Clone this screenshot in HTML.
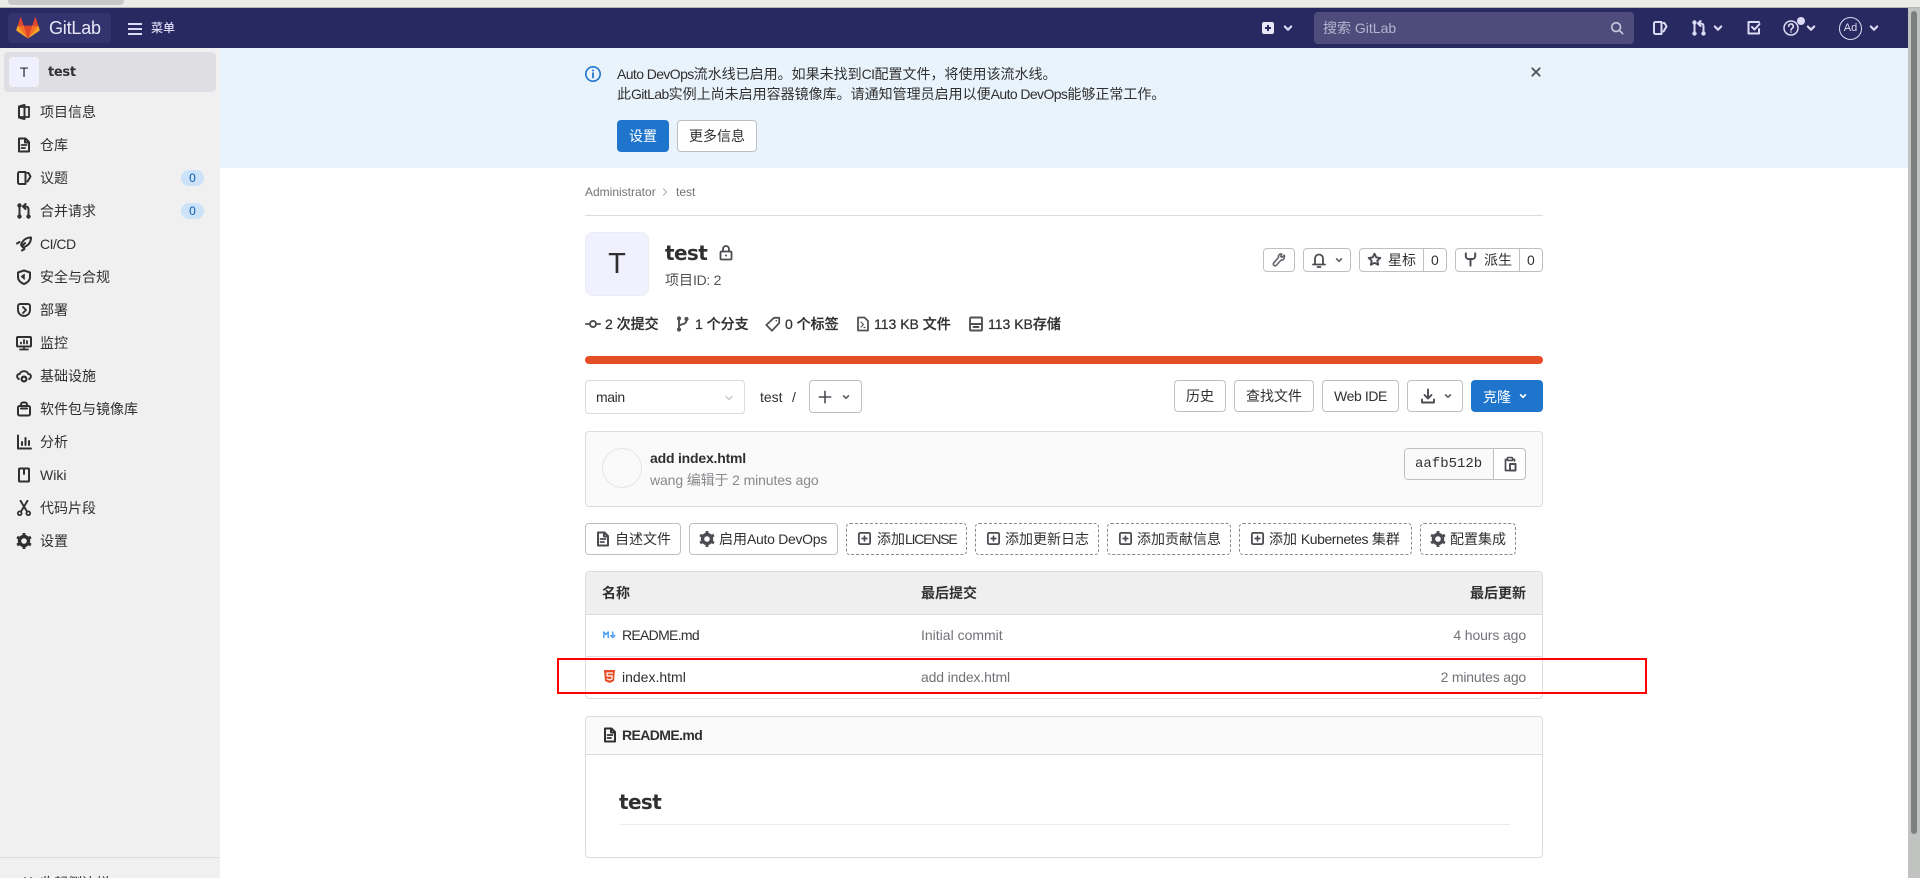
<!DOCTYPE html>
<html lang="zh"><head><meta charset="utf-8"><title>test</title>
<style>
*{box-sizing:border-box}
html,body{margin:0;padding:0;width:1920px;height:878px;overflow:hidden;background:#fff}
body{position:relative;font:14px/20px "Liberation Sans","Noto Sans CJK SC",sans-serif;color:#303030}
.a,.t,svg.i,.b{position:absolute}
.t{white-space:nowrap;line-height:20px}
svg.i{fill:none;stroke:currentColor;stroke-width:1.6;stroke-linecap:round;stroke-linejoin:round;overflow:visible}
.b{background:#fff;border:1px solid #bfbfc3;border-radius:4px}
.d{border-style:dashed;border-color:#89888d}
.s{color:#303030}
.nav{color:#dcdbf5}
.st{font-weight:500;color:#303030;-webkit-text-stroke:.25px #303030}
.n{letter-spacing:-.6px}
</style></head><body>
<svg width="0" height="0" style="position:absolute">
<defs>
<symbol id="project" viewBox="0 0 16 16"><rect x="3" y="3" width="10" height="10" stroke-width="1.800"/><path d="M3 2.500L8.500 1v14L3 13.500z" stroke-width="2"/></symbol>
<symbol id="doc" viewBox="0 0 16 16"><path d="M3 1.500h6.500L13 5v9.500H3zM9 1.500V5.500h4" stroke-width="2"/><path d="M5.500 8h5M5.500 11h3.500" stroke-width="1.800"/></symbol>
<symbol id="issues" viewBox="0 0 16 16"><path d="M9.500 2H3.500A1.500 1.500 0 0 0 2 3.500v9A1.500 1.500 0 0 0 3.500 14h6z" stroke-width="2"/><path d="M11.500 3h1l2 3.500-3 5" stroke-width="2"/></symbol>
<symbol id="mr" viewBox="0 0 16 16"><path d="M3.500 3v10M12.500 13V6.500Q12.500 3.500 9.500 3.500H8M9.500 1L7 3.500 9.500 6" stroke-width="2"/><circle cx="3.500" cy="2.500" r="1.400" fill="currentColor"/><circle cx="3.500" cy="13.500" r="1.400" fill="currentColor"/><circle cx="12.500" cy="13.500" r="1.400" fill="currentColor"/></symbol>
<symbol id="rocket" viewBox="0 0 16 16"><path d="M15 1.500C10 1.500 6.500 4.500 5 9l2 2.500C11.500 10 15 7 15 1.500z" stroke-width="2"/><path d="M1 7.500L3.500 6M6 14.500l2.500-1.500M9 7l-3 3" stroke-width="2"/></symbol>
<symbol id="shield" viewBox="0 0 16 16"><path d="M8 1.500l6 2V8c0 3.500-3 6-6 7-3-1-6-3.500-6-7V3.500z" stroke-width="2"/><path d="M8.500 5v5.500L5 7.500z" fill="currentColor" stroke-width=".6"/></symbol>
<symbol id="deploy" viewBox="0 0 16 16"><path d="M4 2h8a2 2 0 0 1 2 2v4A6 6 0 0 1 2 8V4a2 2 0 0 1 2-2z" stroke-width="1.900"/><path d="M7 5l3 3-3 3" stroke-width="1.900"/></symbol>
<symbol id="monitor" viewBox="0 0 16 16"><rect x="1" y="2" width="14" height="9.500" rx="1" stroke-width="2"/><path d="M4 14.500h8M8 11.500v3M5 8.500v-1M8 8.500V5M11 8.500V6" stroke-width="1.800"/></symbol>
<symbol id="cloud" viewBox="0 0 16 16"><path d="M2.800 11C.3 9.500.6 6 3.700 6c1.300-3.800 7.300-3.800 8.600 0 3.100 0 3.400 3.500.9 5" stroke-width="1.900"/><circle cx="8" cy="11" r="2.400" stroke-width="2.200"/></symbol>
<symbol id="bag" viewBox="0 0 16 16"><rect x="2" y="5" width="12" height="9.500" rx="1.500" stroke-width="2"/><path d="M5 5V3.500a2 2 0 0 1 2-2h2a2 2 0 0 1 2 2V5M5 7.500h6" stroke-width="2"/></symbol>
<symbol id="chart" viewBox="0 0 16 16"><path d="M2 1.500V14.500H15" stroke-width="2"/><path d="M6 8v3M9.500 4v7M13 7v4" stroke-width="2"/></symbol>
<symbol id="wiki" viewBox="0 0 16 16"><rect x="3" y="1.500" width="10" height="13" rx=".8" stroke-width="2"/><path d="M8 2v5" stroke-width="2"/></symbol>
<symbol id="scissors" viewBox="0 0 16 16"><path d="M4.500 .8L11 11.500M11.500 .8L5 11.500" stroke-width="1.900"/><circle cx="3.700" cy="13.300" r="1.900" stroke-width="1.700"/><circle cx="12.300" cy="13.300" r="1.900" stroke-width="1.700"/></symbol>
<symbol id="gear" viewBox="0 0 16 16"><circle cx="8" cy="8" r="4.500" stroke-width="3.400"/><path d="M8 0v2.500M8 13.500V16M1.100 4l2 1.200M12.900 10.800l2 1.200M1.100 12l2-1.200M12.900 5.200l2-1.200" stroke-width="2.800" stroke-linecap="butt"/></symbol>
<symbol id="chev" viewBox="0 0 16 16"><path d="M4.800 6.500L8 9.700l3.200-3.200" stroke-width="2.200"/></symbol>
<symbol id="search" viewBox="0 0 16 16"><circle cx="7" cy="7" r="5" stroke-width="2"/><path d="M11 11l3.500 3.500" stroke-width="2"/></symbol>
<symbol id="close" viewBox="0 0 16 16"><path d="M3 3l10 10M13 3L3 13" stroke-width="2.200"/></symbol>
<symbol id="info" viewBox="0 0 16 16"><circle cx="8" cy="8" r="7.200" stroke-width="1.600"/><path d="M8 7.200V11.500" stroke-width="1.800"/><circle cx="8" cy="4.500" r="1" fill="currentColor" stroke="none"/></symbol>
<symbol id="wrench" viewBox="0 0 16 16"><path d="M14 2.500l-2.500 2.500-1.500-1 1-3C8.500.8 7 2.500 7.500 5L1.800 11.500c-1 2 1 3.800 2.800 2.800L10.500 8c2.500.5 4.500-2 3.500-5.500z" stroke-width="1.800"/></symbol>
<symbol id="bell" viewBox="0 0 16 16"><path d="M2 12.500h12M4 12.500V6.500a4 4 0 0 1 8 0v6M6.500 15h3" stroke-width="1.800"/></symbol>
<symbol id="star" viewBox="0 0 16 16"><path d="M8 1.800l1.900 4 4.300.5-3.200 3 .9 4.300L8 11.500l-3.900 2.100.9-4.300-3.200-3 4.300-.5z" stroke-width="2"/></symbol>
<symbol id="fork" viewBox="0 0 16 16"><path d="M3 1.500v3a3 3 0 0 0 3 3h4a3 3 0 0 0 3-3v-3M8 7.500v7" stroke-width="2.100"/></symbol>
<symbol id="lock" viewBox="0 0 16 16"><rect x="2.500" y="6.500" width="11" height="8" rx="1" stroke-width="1.800"/><path d="M5 6.500V4a3 3 0 0 1 6 0v2.500" stroke-width="1.800"/><circle cx="8" cy="10.500" r="1" fill="currentColor" stroke="none"/></symbol>
<symbol id="commit" viewBox="0 0 16 16"><circle cx="8" cy="8" r="3" stroke-width="2"/><path d="M.8 8H5M11 8h4.200" stroke-width="1.800"/></symbol>
<symbol id="branch" viewBox="0 0 16 16"><path d="M4 2.500V13.500M4 10.500c0-3 7.500-1 7.500-6.500V3" stroke-width="1.900"/><circle cx="4" cy="2.500" r="1.300" fill="currentColor"/><circle cx="4" cy="13.500" r="1.300" fill="currentColor"/><circle cx="11.500" cy="3" r="1.300" fill="currentColor"/></symbol>
<symbol id="tag" viewBox="0 0 16 16"><path d="M9 1.800h5.200V7L7 14.700 1.300 9z" stroke-width="1.800"/><circle cx="11.300" cy="4.700" r=".8" fill="currentColor" stroke="none"/></symbol>
<symbol id="zip" viewBox="0 0 16 16"><path d="M3 1.500h6.500L13 5v9.500H3z" stroke-width="1.800"/><path d="M6 6l2.500 2.500L6 11M9 11.500h1" stroke-width="1.200"/></symbol>
<symbol id="disk" viewBox="0 0 16 16"><rect x="2" y="1.500" width="12" height="13" rx="1" stroke-width="1.900"/><path d="M2 8h12M5.500 11h5" stroke-width="1.900"/></symbol>
<symbol id="download" viewBox="0 0 16 16"><path d="M8 1.500V10M4.500 7L8 10.500 11.500 7M2 11.500V14.500H14V11.500" stroke-width="1.900"/></symbol>
<symbol id="copy" viewBox="0 0 16 16"><path d="M10.500 3.500h2V5M7 14.500H3.500v-11h2" stroke-width="1.700"/><rect x="5.500" y="1.500" width="5" height="3" rx=".8" stroke-width="1.600"/><rect x="8" y="8" width="5.500" height="6.500" stroke-width="1.900"/></symbol>
<symbol id="plusbox" viewBox="0 0 16 16"><rect x="2" y="2" width="12" height="12" rx="1.500" stroke-width="1.900"/><path d="M8 5.500v5M5.500 8h5" stroke-width="1.800"/></symbol>
<symbol id="plus" viewBox="0 0 16 16"><path d="M8 1.500v13M1.500 8h13" stroke-width="1.800"/></symbol>
<symbol id="fox" viewBox="0 0 25 24"><path d="M12.500 23.500L17 10H8z" fill="#e24329" stroke="none"/><path d="M12.500 23.500L8 10H1.700zM12.500 23.500L17 10h6.300z" fill="#fc6d26" stroke="none"/><path d="M1.700 10L.3 14.400a1 1 0 0 0 .4 1.100L12.500 23.500zM23.300 10l1.400 4.400a1 1 0 0 1-.4 1.100L12.500 23.500z" fill="#fca326" stroke="none"/><path d="M1.700 10H8L5.300 1.600a.5.5 0 0 0-.9 0zM23.300 10H17l2.700-8.400a.5.5 0 0 1 .9 0z" fill="#e24329" stroke="none"/></symbol>
</defs></svg>

<!-- browser chrome -->
<div class="a" style="left:0;top:0;width:1920px;height:8px;background:#ebebe9;border-bottom:1px solid #b5b5b5"></div>
<div class="a" style="left:8px;top:0;width:116px;height:5px;background:#c8c8c8;border-radius:0 0 4px 4px"></div>
<!-- scrollbar -->
<div class="a" style="left:1908px;top:8px;width:12px;height:870px;background:#c0c3c0"></div>
<div class="a" style="left:1911px;top:11px;width:6px;height:823px;background:#7c8080;border-radius:3px"></div>

<!-- navbar -->
<div class="a" style="left:0;top:8px;width:1908px;height:40px;background:#292961"></div>
<div class="a" style="left:8px;top:13px;width:103px;height:30px;background:#333370;border-radius:4px"></div>
<svg class="i" style="left:16px;top:16px" width="24" height="23"><use href="#fox"/></svg>
<div class="t" style="left:49px;top:18px;font-size:18px;letter-spacing:-.2px;color:#e7e7f5">GitLab</div>
<div class="a" style="left:128px;top:23px;width:14px;height:2px;background:#dcdbf5"></div>
<div class="a" style="left:128px;top:28px;width:14px;height:2px;background:#dcdbf5"></div>
<div class="a" style="left:128px;top:33px;width:14px;height:2px;background:#dcdbf5"></div>
<div class="t" style="left:151px;top:18px;font-size:12px;color:#dcdbf5;font-weight:500">菜单</div>

<div class="a" style="left:1262px;top:22px;width:12px;height:12px;background:#e8e8f8;border-radius:2px"></div>
<div class="a" style="left:1265px;top:27px;width:6px;height:2px;background:#292961"></div>
<div class="a" style="left:1267px;top:25px;width:2px;height:6px;background:#292961"></div>
<svg class="i nav" style="left:1280px;top:20px" width="16" height="16"><use href="#chev"/></svg>
<div class="a" style="left:1314px;top:12px;width:320px;height:32px;background:#4d4c7b;border-radius:4px"></div>
<div class="t" style="left:1323px;top:18px;color:#b5b5d0">搜索 GitLab</div>
<svg class="i" style="left:1610px;top:21px;color:#c5c5dd" width="14" height="14"><use href="#search"/></svg>
<svg class="i nav" style="left:1652px;top:20px" width="16" height="16"><use href="#issues"/></svg>
<svg class="i nav" style="left:1691px;top:20px" width="16" height="16"><use href="#mr"/></svg>
<svg class="i nav" style="left:1710px;top:20px" width="16" height="16"><use href="#chev"/></svg>
<svg class="i nav" style="left:1746px;top:20px" width="16" height="16"><path d="M13 2H2.500v11.500H13V9M6 7l2.500 2.500L13.500 4" stroke-width="2"/></svg>
<svg class="i nav" style="left:1783px;top:20px" width="16" height="16"><circle cx="8" cy="8" r="7" stroke-width="1.500"/><path d="M5.700 6.300a2.300 2.300 0 1 1 3.400 2C8.300 8.800 8 9.200 8 10" stroke-width="1.600"/><circle cx="8" cy="12" r=".8" fill="currentColor" stroke="none"/></svg>
<div class="a" style="left:1797px;top:17px;width:8px;height:8px;border-radius:50%;background:#dcdbf5"></div>
<svg class="i nav" style="left:1803px;top:20px" width="16" height="16"><use href="#chev"/></svg>
<div class="a" style="left:1839px;top:17px;width:23px;height:23px;border:1px solid #dcdbf5;border-radius:50%;color:#dcdbf5;font-size:11px;line-height:21px;text-align:center">Ad</div>
<svg class="i nav" style="left:1866px;top:20px" width="16" height="16"><use href="#chev"/></svg>

<!-- sidebar -->
<div class="a" style="left:0;top:48px;width:220px;height:830px;background:#f0f0f0"></div>
<div class="a" style="left:4px;top:52px;width:212px;height:40px;background:#dfdfe3;border-radius:4px"></div>
<div class="a" style="left:9px;top:57px;width:30px;height:30px;background:#f0f0ff;border-radius:4px;text-align:center;line-height:30px;font-size:14px;color:#303030">T</div>
<div class="t" style="left:48px;top:63px;font:bold 13px/20px 'DejaVu Sans',sans-serif;color:#303030;letter-spacing:-.3px">test</div>

<svg class="i s" style="left:16px;top:104px" width="16" height="16"><use href="#project"/></svg><div class="t" style="left:40px;top:102px">项目信息</div>
<svg class="i s" style="left:16px;top:137px" width="16" height="16"><use href="#doc"/></svg><div class="t" style="left:40px;top:135px">仓库</div>
<svg class="i s" style="left:16px;top:170px" width="16" height="16"><use href="#issues"/></svg><div class="t" style="left:40px;top:168px">议题</div>
<div class="a" style="left:181px;top:170px;width:23px;height:16px;background:#cbe2f9;border-radius:8px;text-align:center;font-size:12px;line-height:16px;color:#0b5cad">0</div>
<svg class="i s" style="left:16px;top:203px" width="16" height="16"><use href="#mr"/></svg><div class="t" style="left:40px;top:201px">合并请求</div>
<div class="a" style="left:181px;top:203px;width:23px;height:16px;background:#cbe2f9;border-radius:8px;text-align:center;font-size:12px;line-height:16px;color:#0b5cad">0</div>
<svg class="i s" style="left:16px;top:236px" width="16" height="16"><use href="#rocket"/></svg><div class="t" style="left:40px;top:234px;letter-spacing:-.5px">CI/CD</div>
<svg class="i s" style="left:16px;top:269px" width="16" height="16"><use href="#shield"/></svg><div class="t" style="left:40px;top:267px">安全与合规</div>
<svg class="i s" style="left:16px;top:302px" width="16" height="16"><use href="#deploy"/></svg><div class="t" style="left:40px;top:300px">部署</div>
<svg class="i s" style="left:16px;top:335px" width="16" height="16"><use href="#monitor"/></svg><div class="t" style="left:40px;top:333px">监控</div>
<svg class="i s" style="left:16px;top:368px" width="16" height="16"><use href="#cloud"/></svg><div class="t" style="left:40px;top:366px">基础设施</div>
<svg class="i s" style="left:16px;top:401px" width="16" height="16"><use href="#bag"/></svg><div class="t" style="left:40px;top:399px">软件包与镜像库</div>
<svg class="i s" style="left:16px;top:434px" width="16" height="16"><use href="#chart"/></svg><div class="t" style="left:40px;top:432px">分析</div>
<svg class="i s" style="left:16px;top:467px" width="16" height="16"><use href="#wiki"/></svg><div class="t" style="left:40px;top:465px">Wiki</div>
<svg class="i s" style="left:16px;top:500px" width="16" height="16"><use href="#scissors"/></svg><div class="t" style="left:40px;top:498px">代码片段</div>
<svg class="i s" style="left:16px;top:533px" width="16" height="16"><use href="#gear"/></svg><div class="t" style="left:40px;top:531px">设置</div>
<div class="a" style="left:0;top:857px;width:220px;height:1px;background:#dcdcde"></div>
<svg class="i s" style="left:20px;top:876px" width="12" height="12"><path d="M5 2L1 6l4 4M11 2L7 6l4 4" stroke-width="1.700"/></svg>
<div class="t" style="left:40px;top:873px">收起侧边栏</div>

<!-- alert -->
<div class="a" style="left:220px;top:48px;width:1688px;height:120px;background:#e9f3fc"></div>
<svg class="i" style="left:585px;top:66px;color:#1f75cb" width="16" height="16"><use href="#info"/></svg>
<div class="t" style="left:617px;top:64px"><span class="n">Auto DevOps</span>流水线已启用。如果未找到<span class="n">CI</span>配置文件，将使用该流水线。</div>
<div class="t" style="left:617px;top:84px">此<span class="n">GitLab</span>实例上尚未启用容器镜像库。请通知管理员启用以便<span class="n">Auto DevOps</span>能够正常工作。</div>
<div class="a" style="left:617px;top:120px;width:52px;height:32px;background:#1f75cb;border-radius:4px;color:#fff;text-align:center;line-height:32px">设置</div>
<div class="b" style="left:677px;top:120px;width:80px;height:32px;text-align:center;line-height:30px">更多信息</div>
<svg class="i" style="left:1530px;top:66px;color:#4c4b51" width="12" height="12"><use href="#close"/></svg>

<!-- breadcrumb -->
<div class="t" style="left:585px;top:182px;font-size:12px;color:#737278">Administrator</div>
<svg class="i" style="left:662px;top:188px;color:#a5a5aa" width="6" height="8"><path d="M1.500 .8L4.500 4 1.500 7.200" stroke-width="1"/></svg>
<div class="t" style="left:676px;top:182px;font-size:12px;color:#737278">test</div>
<div class="a" style="left:585px;top:215px;width:958px;height:1px;background:#dcdcde"></div>

<!-- project header -->
<div class="a" style="left:585px;top:232px;width:64px;height:64px;background:#f0f0ff;border:1px solid #ececf5;border-radius:8px;text-align:center;font-size:29px;line-height:62px;color:#303030">T</div>
<div class="t" style="left:665px;top:242px;font:bold 20px/22px 'DejaVu Sans',sans-serif;letter-spacing:-.6px;color:#303030">test</div>
<svg class="i" style="left:718px;top:245px;color:#4c4b51" width="16" height="16"><use href="#lock"/></svg>
<div class="t" style="left:665px;top:270px;color:#525252">项目<span style="letter-spacing:-.3px">ID: 2</span></div>

<div class="b" style="left:1263px;top:248px;width:32px;height:24px"></div>
<svg class="i" style="left:1272px;top:253px;color:#626168" width="14" height="14"><use href="#wrench"/></svg>
<div class="b" style="left:1303px;top:248px;width:48px;height:24px"></div>
<svg class="i" style="left:1311px;top:252px;color:#4c4b51" width="16" height="16"><use href="#bell"/></svg>
<svg class="i" style="left:1333px;top:254px;color:#626168" width="12" height="12"><use href="#chev"/></svg>
<div class="b" style="left:1359px;top:248px;width:87.500px;height:24px"></div>
<div class="a" style="left:1423px;top:249px;width:1px;height:22px;background:#bfbfc3"></div>
<svg class="i" style="left:1367px;top:252px;color:#4c4b51" width="15" height="15"><use href="#star"/></svg>
<div class="t" style="left:1388px;top:250px">星标</div>
<div class="t" style="left:1431px;top:250px">0</div>
<div class="b" style="left:1455px;top:248px;width:88px;height:24px"></div>
<div class="a" style="left:1519px;top:249px;width:1px;height:22px;background:#bfbfc3"></div>
<svg class="i" style="left:1463px;top:252px;color:#4c4b51" width="15" height="15"><use href="#fork"/></svg>
<div class="t" style="left:1484px;top:250px">派生</div>
<div class="t" style="left:1527px;top:250px">0</div>

<!-- stats -->
<svg class="i" style="left:585px;top:316px;color:#525252" width="16" height="16"><use href="#commit"/></svg>
<div class="t st" style="left:605px;top:314px">2 次提交</div>
<svg class="i" style="left:675px;top:316px;color:#525252" width="16" height="16"><use href="#branch"/></svg>
<div class="t st" style="left:695px;top:314px">1 个分支</div>
<svg class="i" style="left:765px;top:316px;color:#525252" width="16" height="16"><use href="#tag"/></svg>
<div class="t st" style="left:785px;top:314px">0 个标签</div>
<svg class="i" style="left:855px;top:316px;color:#525252" width="16" height="16"><use href="#zip"/></svg>
<div class="t st" style="left:874px;top:314px">113 KB 文件</div>
<svg class="i" style="left:968px;top:316px;color:#525252" width="16" height="16"><use href="#disk"/></svg>
<div class="t st" style="left:988px;top:314px">113 KB存储</div>

<!-- language bar -->
<div class="a" style="left:585px;top:356px;width:958px;height:8px;background:#e44d26;border-radius:4px"></div>

<!-- branch row -->
<div class="b" style="left:585px;top:380px;width:160px;height:34px;border-color:#dcdcde"></div>
<div class="t" style="left:596px;top:387px;letter-spacing:-.4px">main</div>
<svg class="i" style="left:723px;top:392px;color:#bfbfc3" width="12" height="12"><path d="M3 4.500L6 7.500 9 4.500" stroke-width="1.200"/></svg>
<div class="t" style="left:760px;top:387px">test</div>
<div class="t" style="left:792px;top:387px">/</div>
<div class="b" style="left:809px;top:380px;width:53px;height:33px"></div>
<svg class="i" style="left:818px;top:390px;color:#4c4b51" width="14" height="14"><use href="#plus"/></svg>
<svg class="i" style="left:840px;top:391px;color:#626168" width="12" height="12"><use href="#chev"/></svg>

<div class="b" style="left:1174px;top:380px;width:52px;height:32px;text-align:center;line-height:30px">历史</div>
<div class="b" style="left:1234px;top:380px;width:80px;height:32px;text-align:center;line-height:30px">查找文件</div>
<div class="b" style="left:1322px;top:380px;width:77px;height:32px;text-align:center;line-height:30px;letter-spacing:-.4px">Web IDE</div>
<div class="b" style="left:1407px;top:380px;width:56px;height:32px"></div>
<svg class="i" style="left:1420px;top:388px;color:#4c4b51" width="16" height="16"><use href="#download"/></svg>
<svg class="i" style="left:1442px;top:390px;color:#626168" width="12" height="12"><use href="#chev"/></svg>
<div class="a" style="left:1471px;top:380px;width:72px;height:32px;background:#1f75cb;border-radius:4px"></div>
<div class="t" style="left:1483px;top:387px;color:#fff">克隆</div>
<svg class="i" style="left:1517px;top:390px;color:#fff" width="12" height="12"><use href="#chev"/></svg>

<!-- commit box -->
<div class="a" style="left:585px;top:431px;width:958px;height:76px;background:#fafafa;border:1px solid #dcdcde;border-radius:4px"></div>
<div class="a" style="left:602px;top:448px;width:40px;height:40px;border-radius:50%;background:#fafafa;border:1px solid #e5e5e5"></div>
<div class="t" style="left:650px;top:448px;font-weight:bold;letter-spacing:-.2px">add index.html</div>
<div class="t" style="left:650px;top:470px;color:#89888d;letter-spacing:-.12px">wang 编辑于 2 minutes ago</div>
<div class="a" style="left:1404px;top:448px;width:122px;height:32px;border:1px solid #bfbfc3;border-radius:4px;background:#fff"></div>
<div class="a" style="left:1405px;top:449px;width:89px;height:30px;background:#fafafa;border-right:1px solid #bfbfc3;border-radius:3px 0 0 3px"></div>
<div class="t" style="left:1415px;top:454px;font-family:'Liberation Mono',monospace;font-size:14px;color:#303030">aafb512b</div>
<svg class="i" style="left:1502px;top:456px;color:#4c4b51" width="16" height="16"><use href="#copy"/></svg>

<!-- action buttons -->
<div class="b" style="left:585px;top:523px;width:96px;height:32px"></div>
<svg class="i" style="left:595px;top:531px;color:#4c4b51" width="16" height="16"><use href="#doc"/></svg>
<div class="t" style="left:615px;top:529px">自述文件</div>
<div class="b" style="left:689px;top:523px;width:149px;height:32px"></div>
<svg class="i" style="left:699px;top:531px;color:#4c4b51" width="16" height="16"><use href="#gear"/></svg>
<div class="t" style="left:719px;top:529px">启用<span style="letter-spacing:-.3px">Auto DevOps</span></div>
<div class="b d" style="left:846px;top:523px;width:121px;height:32px"></div>
<svg class="i" style="left:857px;top:531px;color:#4c4b51" width="15" height="15"><use href="#plusbox"/></svg>
<div class="t" style="left:877px;top:529px">添加<span style="letter-spacing:-1.200px">LICENSE</span></div>
<div class="b d" style="left:975px;top:523px;width:124px;height:32px"></div>
<svg class="i" style="left:986px;top:531px;color:#4c4b51" width="15" height="15"><use href="#plusbox"/></svg>
<div class="t" style="left:1005px;top:529px">添加更新日志</div>
<div class="b d" style="left:1107px;top:523px;width:124px;height:32px"></div>
<svg class="i" style="left:1118px;top:531px;color:#4c4b51" width="15" height="15"><use href="#plusbox"/></svg>
<div class="t" style="left:1137px;top:529px">添加贡献信息</div>
<div class="b d" style="left:1239px;top:523px;width:173px;height:32px"></div>
<svg class="i" style="left:1250px;top:531px;color:#4c4b51" width="15" height="15"><use href="#plusbox"/></svg>
<div class="t" style="left:1269px;top:529px">添加 <span style="letter-spacing:-.45px">Kubernetes</span> 集群</div>
<div class="b d" style="left:1420px;top:523px;width:96px;height:32px"></div>
<svg class="i" style="left:1430px;top:531px;color:#4c4b51" width="16" height="16"><use href="#gear"/></svg>
<div class="t" style="left:1450px;top:529px">配置集成</div>

<!-- file table -->
<div class="a" style="left:585px;top:571px;width:958px;height:128px;border:1px solid #dcdcde;border-radius:4px;background:#fff;overflow:hidden">
  <div class="a" style="left:0;top:0;width:956px;height:43px;background:#efefef;border-bottom:1px solid #dcdcde"></div>
  <div class="a" style="left:0;top:84px;width:956px;height:1px;background:#dcdcde"></div>
</div>
<div class="t" style="left:602px;top:583px;font-weight:bold">名称</div>
<div class="t" style="left:921px;top:583px;font-weight:bold">最后提交</div>
<div class="t" style="right:394px;top:583px;font-weight:bold">最后更新</div>
<svg class="i" style="left:603px;top:630px;color:#4a9ff0" width="13" height="10"><path d="M.8 7.500V2L3 4.500 5.200 2v5.500M9.800 2v5M7.800 5.500L9.800 7.500l2-2" stroke-width="1.500"/></svg>
<div class="t" style="left:622px;top:625px;letter-spacing:-.7px">README.md</div>
<div class="t" style="left:921px;top:625px;color:#737278">Initial commit</div>
<div class="t" style="right:394px;top:625px;color:#737278;letter-spacing:-.12px">4 hours ago</div>
<svg class="i" style="left:604px;top:670px" width="11" height="13"><path d="M0 0h11l-1 11-4.500 2L1 11z" fill="#e44d26" stroke="none"/><path d="M8.300 3H3l.2 3h5l-.3 3L5.500 10 3.200 9" stroke="#fff" stroke-width="1.200" stroke-linecap="square" stroke-linejoin="miter"/></svg>
<div class="t" style="left:622px;top:667px">index.html</div>
<div class="t" style="left:921px;top:667px;color:#737278;letter-spacing:-.15px">add index.html</div>
<div class="t" style="right:394px;top:667px;color:#737278;letter-spacing:-.2px">2 minutes ago</div>

<!-- red annotation -->
<div class="a" style="left:557px;top:658px;width:1090px;height:36px;border:2px solid #f00"></div>

<!-- readme -->
<div class="a" style="left:585px;top:716px;width:958px;height:142px;border:1px solid #dcdcde;border-radius:4px;background:#fff;overflow:hidden">
  <div class="a" style="left:0;top:0;width:956px;height:38px;background:#fafafa;border-bottom:1px solid #dcdcde"></div>
</div>
<svg class="i" style="left:602px;top:727px;color:#303030" width="16" height="16"><use href="#doc"/></svg>
<div class="t" style="left:622px;top:725px;font-weight:bold;letter-spacing:-.6px">README.md</div>
<div class="t" style="left:619px;top:791px;font:bold 20px/22px 'DejaVu Sans',sans-serif;letter-spacing:-.6px;color:#303030">test</div>
<div class="a" style="left:619px;top:824px;width:891px;height:1px;background:#ececec"></div>
</body></html>
